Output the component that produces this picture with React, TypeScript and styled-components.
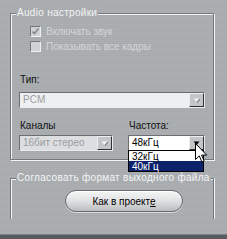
import React from "react";
import styled, { createGlobalStyle } from "styled-components";

const colors = {
  face: "#a9adb0",
  shade: "#74787b",
  light: "#f2f3f4",
  text: "#101010",
  dimText: "#d3d5d7",
  titleText: "#f3f4f5",
  highlight: "#0c226a",
};

const GlobalStyle = createGlobalStyle`
  html, body {
    margin: 0;
    padding: 0;
  }
  body {
    background: ${colors.face};
    font-family: "Liberation Sans", Arial, sans-serif;
    font-size: 10px;
    overflow: hidden;
  }
`;

const Page = styled.div`
  position: relative;
  width: 227px;
  height: 239px;
  box-sizing: border-box;
  padding: 13px 13px 0 10px;
  display: flex;
  flex-direction: column;
  background-color: ${colors.face};
  background-image: repeating-linear-gradient(
    0deg,
    rgba(255, 255, 255, 0.035) 0 1px,
    rgba(0, 0, 0, 0.02) 1px 2px
  );
`;

const Group = styled.div<{ $height: number; $open?: boolean; $gap?: number }>`
  position: relative;
  height: ${p => p.$height}px;
  margin-top: ${p => p.$gap ?? 0}px;
  box-sizing: border-box;
  border: 1px solid ${colors.shade};
  border-bottom: ${p => (p.$open ? "none" : `1px solid ${colors.shade}`)};
  box-shadow: ${p =>
    p.$open
      ? `inset 1px 1px 0 ${colors.light}, 1px 0 0 ${colors.light}`
      : `inset 1px 1px 0 ${colors.light}, 1px 1px 0 ${colors.light}`};
`;

const Legend = styled.span`
  position: absolute;
  top: -7px;
  left: 5px;
  padding: 0 1px;
  line-height: 12px;
  letter-spacing: 0.3px;
  white-space: nowrap;
  color: ${colors.titleText};
  background: ${colors.face};
`;

const Content = styled.div<{ $top: number }>`
  display: flex;
  flex-direction: column;
  padding: ${p => p.$top}px 8px 0 8px;
`;

const CheckRow = styled.div<{ $gap?: number }>`
  display: flex;
  align-items: center;
  gap: 5px;
  height: 11px;
  margin: ${p => p.$gap ?? 0}px 0 0 11px;
  color: ${colors.dimText};
  line-height: 11px;
  white-space: nowrap;
`;

const CheckBox = styled.span`
  display: flex;
  align-items: center;
  justify-content: center;
  width: 11px;
  height: 11px;
  box-sizing: border-box;
  border: 1px solid;
  border-color: ${colors.shade} #eef0f1 #eef0f1 ${colors.shade};
  background: #d0d3d5;
`;

const FieldLabel = styled.div<{ $gap: number }>`
  margin: ${p => p.$gap}px 0 0 1px;
  line-height: 12px;
  color: ${colors.text};
`;

const Pair = styled.div<{ $gap: number }>`
  display: grid;
  grid-template-columns: 94px 1fr;
  column-gap: 15px;
  margin-top: ${p => p.$gap}px;
`;

const PairLabel = styled.div`
  margin-left: 1px;
  line-height: 12px;
  color: ${colors.text};
`;

const Combo = styled.div<{ $gap?: number; $bg: string }>`
  position: relative;
  display: flex;
  height: 16px;
  margin-top: ${p => p.$gap ?? 0}px;
  box-sizing: border-box;
  border: 1px solid;
  border-color: #6a6e71 #e9ebec #e9ebec #6a6e71;
  background: ${p => p.$bg};
`;

const ComboText = styled.span<{ $color: string }>`
  flex: 1;
  padding-left: 3px;
  line-height: 14px;
  color: ${p => p.$color};
  white-space: nowrap;
  overflow: hidden;
`;

const DropButton = styled.span`
  display: flex;
  align-items: center;
  justify-content: center;
  width: 15px;
  height: 14px;
  box-sizing: border-box;
  border: 1px solid;
  border-color: #eceeef #2e3032 #2e3032 #eceeef;
  background: #c3c6c8;
`;

const DropList = styled.div`
  position: absolute;
  top: 100%;
  left: -1px;
  right: 0;
  z-index: 2;
  box-sizing: border-box;
  border: 1px solid #000;
  background: #fff;
`;

const DropItem = styled.div<{ $selected?: boolean }>`
  height: 10px;
  padding-left: 3px;
  line-height: 11px;
  color: ${p => (p.$selected ? "#fff" : "#000")};
  background: ${p => (p.$selected ? colors.highlight : "transparent")};
`;

const PillButton = styled.button`
  width: 118px;
  height: 22px;
  margin-left: 46px;
  padding: 0;
  border: 1px solid #6a6d70;
  border-radius: 11px;
  background: linear-gradient(#f4f5f5, #e2e3e4 45%, #c9cbcd 80%, #b9bcbe);
  box-shadow: 0 1px 0 #d9dbdc, inset 0 1px 0 #ffffff;
  font-family: "Liberation Sans", Arial, sans-serif;
  font-size: 10px;
  color: #000;
`;

const Mnemonic = styled.span`
  text-decoration: underline;
`;

const BottomBar = styled.div`
  margin: auto -13px 0 -10px;
  height: 4px;
  background: #585c5f;
  border-top: 1px solid #7d8184;
`;

const Cursor = styled.svg`
  position: absolute;
  left: 195px;
  top: 143px;
  z-index: 3;
`;

const Arrow = ({ enabled }: { enabled: boolean }) => (
  <svg width="7" height="5" viewBox="0 0 7 5">
    {!enabled && <path d="M1.5 1h6l-3 4z" fill="#7d8083" />}
    <path d="M0.5 0.5h6l-3 3.5z" fill={enabled ? "#000" : "#f4f4f4"} />
  </svg>
);

const Check = () => (
  <svg width="7" height="7" viewBox="0 0 7 7">
    <path d="M0.5 3.5l2 2 4-5" fill="none" stroke="#858a8d" strokeWidth="1.6" />
  </svg>
);

export default function App() {
  return (
    <>
      <GlobalStyle />
      <Page>
        <Group $height={147}>
          <Legend>Audio настройки</Legend>
          <Content $top={12}>
            <CheckRow>
              <CheckBox>
                <Check />
              </CheckBox>
              Включать звук
            </CheckRow>
            <CheckRow $gap={4}>
              <CheckBox />
              Показывать все кадры
            </CheckRow>

            <FieldLabel $gap={22}>Тип:</FieldLabel>
            <Combo $gap={6} $bg="#eeeff0">
              <ComboText $color="#9b9ea1">PCM</ComboText>
              <DropButton>
                <Arrow enabled={false} />
              </DropButton>
            </Combo>

            <Pair $gap={12}>
              <PairLabel>Каналы</PairLabel>
              <PairLabel>Частота:</PairLabel>
            </Pair>
            <Pair $gap={3}>
              <Combo $bg="#dcdedf">
                <ComboText $color="#9a9da0">16бит стерео</ComboText>
                <DropButton>
                  <Arrow enabled={false} />
                </DropButton>
              </Combo>
              <Combo $bg="#ffffff">
                <ComboText $color="#000">48кГц</ComboText>
                <DropButton>
                  <Arrow enabled />
                </DropButton>
                <DropList>
                  <DropItem>32кГц</DropItem>
                  <DropItem $selected>40кГц</DropItem>
                </DropList>
              </Combo>
            </Pair>
          </Content>
        </Group>

        <Group $height={41} $open $gap={18}>
          <Legend>Согласовать формат выходного файла</Legend>
          <Content $top={11}>
            <PillButton>
              Как в проект<Mnemonic>е</Mnemonic>
            </PillButton>
          </Content>
        </Group>

        <BottomBar />

        <Cursor width="13" height="20" viewBox="0 0 13 20">
          <path
            d="M0.5 0.5v16l3.8-3.6 2.6 6 2.2-1-2.6-5.8h5.2z"
            fill="#fff"
            stroke="#000"
            strokeWidth="1"
            strokeLinejoin="miter"
          />
        </Cursor>
      </Page>
    </>
  );
}
